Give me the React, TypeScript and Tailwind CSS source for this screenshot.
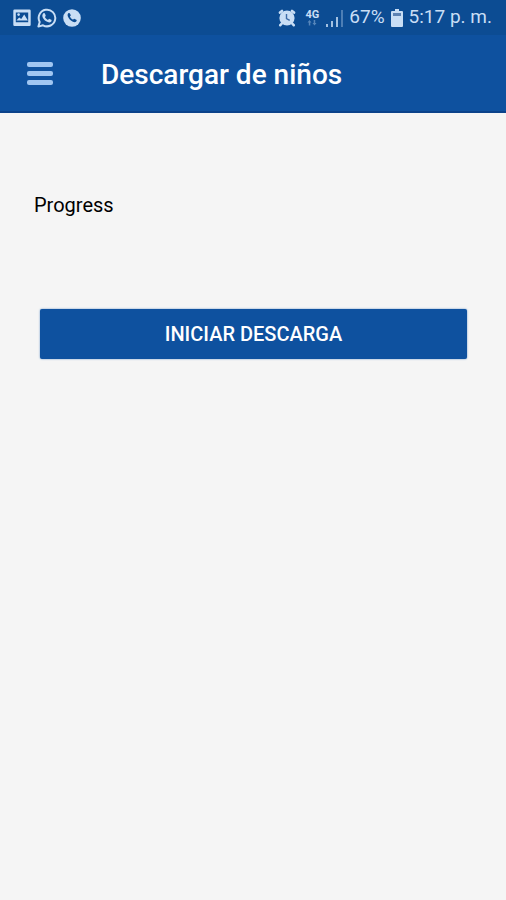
import React from "react";

// Status bar icons
const ImageIcon = () => (
  <svg viewBox="0 0 18 18" className="h-[18px] w-[18px]" aria-hidden="true">
    <path
      fill="currentColor"
      fillRule="evenodd"
      d="M1.5 0.5h15a1.2 1.2 0 0 1 1.2 1.2v14a1.2 1.2 0 0 1-1.2 1.2h-15a1.2 1.2 0 0 1-1.2-1.2v-14A1.2 1.2 0 0 1 1.5 0.5zM2.8 3.6v9.6h12.4V3.6z"
    />
    <path fill="currentColor" d="M3.4 11.4l2.8-3 2 1.6 3-4.4 3.7 5.8z" />
    <circle cx="5.6" cy="5.6" r="1.3" fill="currentColor" />
  </svg>
);

const WhatsappIcon = () => (
  <svg viewBox="0 0 20 20" className="h-5 w-5" aria-hidden="true">
    <path
      fill="none"
      stroke="currentColor"
      strokeWidth="2"
      strokeLinejoin="round"
      d="M1.4 18.6l1.3-4.6A8.3 8.3 0 1 1 6 17.3z"
    />
    <path
      fill="currentColor"
      d="M6.2 5.6c.6-.7 1.4-.6 1.7 0l.8 1.8c.1.4-.1.8-.8 1.5.7 1.4 1.8 2.4 3.2 3 .6-.8 1-1.2 1.4-1l1.8.9c.5.3.4 1.3-.2 1.9-.8.8-2 .9-3.3.4-2.5-.9-4.2-2.7-5.2-4.9-.5-1.3-.3-2.7.6-3.6z"
    />
  </svg>
);

const PhoneIcon = () => (
  <svg viewBox="0 0 18 18" className="h-[18px] w-[18px]" aria-hidden="true">
    <circle cx="9" cy="9" r="8.8" fill="currentColor" />
    <path
      fill="#0c4c93"
      d="M5.3 4.3c.6-.6 1.3-.5 1.6.1l.8 1.7c.2.5-.1.9-.8 1.5.7 1.5 1.7 2.5 3.1 3.2.7-.8 1.1-1.1 1.6-.9l1.7.8c.6.4.5 1.2-.1 1.8-.8.8-2 .8-3.3.2-2.3-1-3.9-2.7-4.9-4.9-.6-1.3-.5-2.7.3-3.5z"
    />
  </svg>
);

const AlarmIcon = () => (
  <svg viewBox="0 0 18 18" className="h-[18px] w-[18px]" aria-hidden="true">
    <g stroke="currentColor" strokeWidth="2.6" strokeLinecap="round">
      <path d="M2 3.6l2-1.6M16 3.6l-2-1.6M3.8 14.5l-1.5 1.7M14.2 14.5l1.5 1.7" />
    </g>
    <circle cx="9" cy="9" r="7.6" fill="currentColor" />
    <path
      fill="none"
      stroke="#3d6ca8"
      strokeWidth="1.4"
      d="M8.5 5v4.5l3.2 1.8"
    />
  </svg>
);

const SignalIcon = () => (
  <svg viewBox="0 0 18 18" className="h-[18px] w-[18px]" aria-hidden="true">
    <g fill="currentColor">
      <rect x="1" y="15" width="2" height="3" opacity="0.8" />
      <rect x="6" y="12" width="2" height="6" opacity="0.8" />
      <rect x="11" y="8" width="2" height="10" opacity="0.8" />
      <rect x="16" y="1" width="2" height="17" opacity="0.35" />
    </g>
  </svg>
);

const BatteryIcon = () => (
  <svg viewBox="0 0 12 18" className="h-[18px] w-3" aria-hidden="true">
    <path
      fill="currentColor"
      d="M4 0h4v2h3a1 1 0 0 1 1 1v14a1 1 0 0 1-1 1H1a1 1 0 0 1-1-1V3a1 1 0 0 1 1-1h3z"
    />
    <rect x="2" y="4" width="8" height="3" fill="#5d82b3" />
  </svg>
);

const StatusBar = () => (
  <div className="flex h-[35px] items-center justify-between bg-[#0c4c93] pr-[14px] pl-[13px] text-[#c9def5]">
    <div className="flex items-center gap-[6px]">
      <ImageIcon />
      <WhatsappIcon />
      <PhoneIcon />
    </div>
    <div className="flex items-center text-[19px]">
      <AlarmIcon />
      <div className="ml-[9px] flex flex-col items-center">
        <span className="text-[11px] leading-[10px] font-bold">4G</span>
        <svg viewBox="0 0 10 6" className="h-[6px] w-[10px]" aria-hidden="true">
          <path
            fill="currentColor"
            opacity="0.4"
            d="M2.5 0l2 2.5h-1.2v3h-1.5v-3H.5zM7.5 5.5l-2-2.5h1.2V0h1.5v3h1.3z"
          />
        </svg>
      </div>
      <div className="ml-[6px]">
        <SignalIcon />
      </div>
      <span className="ml-[6px]">67%</span>
      <div className="ml-[6px]">
        <BatteryIcon />
      </div>
      <span className="ml-[6px]">5:17 p. m.</span>
    </div>
  </div>
);

const App = () => {
  return (
    <div className="min-h-screen bg-[#f5f5f5] font-[Roboto,sans-serif]">
      <StatusBar />

      {/* Toolbar */}
      <header className="flex h-[78px] items-center border-b-2 border-[#0b428a] bg-[#0e519f] px-[27px] pt-1">
        <button
          type="button"
          aria-label="Menu"
          className="flex w-[26px] flex-col gap-1 pb-1"
        >
          <span className="h-[5px] w-full rounded-xs bg-[#a0c6f2]"></span>
          <span className="h-[5px] w-full rounded-xs bg-[#a0c6f2]"></span>
          <span className="h-[5px] w-full rounded-xs bg-[#a0c6f2]"></span>
        </button>
        <h1 className="ml-12 text-[28px] leading-8 font-medium text-white">
          Descargar de niños
        </h1>
      </header>

      {/* Content */}
      <main className="px-[34px] pt-20">
        <p className="text-xl leading-6 text-black">Progress</p>
        <div className="mt-[92px] pr-[5px] pl-[6px]">
          <button
            type="button"
            className="h-[50px] w-full rounded-xs bg-[#0e519f] text-xl font-medium text-white shadow-[0_0_2px_#5d8fc6]"
          >
            INICIAR DESCARGA
          </button>
        </div>
      </main>
    </div>
  );
};

export default App;
